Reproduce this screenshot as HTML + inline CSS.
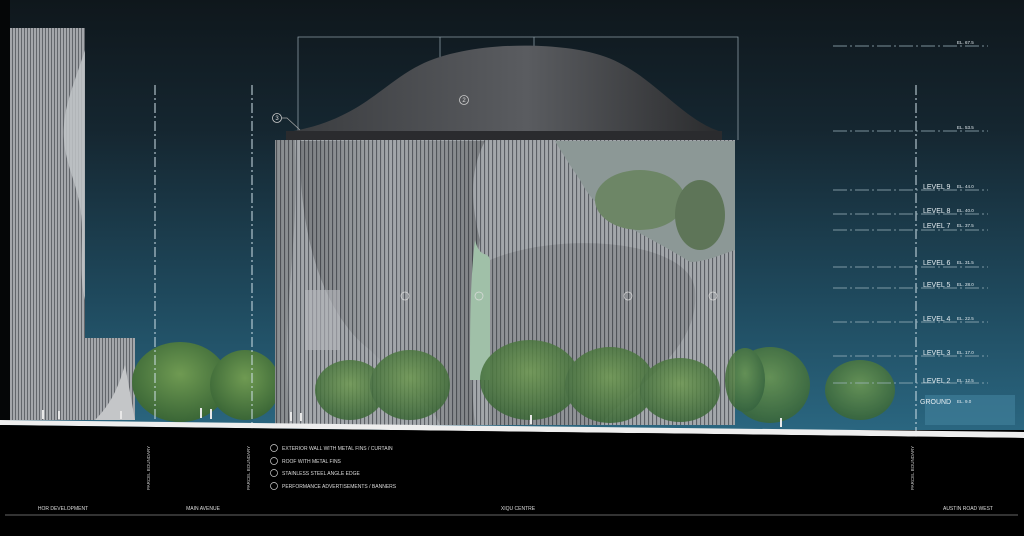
<!DOCTYPE html>
<html><head><meta charset="utf-8"><style>
html,body{margin:0;padding:0;background:#000;width:1024px;height:536px;overflow:hidden}
svg{display:block}
text{font-family:"Liberation Sans",sans-serif}
</style></head><body>
<svg width="1024" height="536" viewBox="0 0 1024 536" xmlns="http://www.w3.org/2000/svg">
<defs>
<linearGradient id="sky" x1="0" y1="0" x2="0" y2="1">
<stop offset="0" stop-color="#0f171c"/><stop offset="0.3" stop-color="#152630"/><stop offset="0.7" stop-color="#1f4a5e"/><stop offset="1" stop-color="#2a6680"/>
</linearGradient>
<pattern id="fins" width="4" height="10" patternUnits="userSpaceOnUse">
<rect width="4" height="10" fill="#a3a7ab"/><rect width="1.1" height="10" fill="#5c6066"/>
</pattern>
<pattern id="fins2" width="3" height="10" patternUnits="userSpaceOnUse">
<rect width="3" height="10" fill="#a4a7ab"/><rect width="1" height="10" fill="#62666b"/>
</pattern>
<linearGradient id="roof" x1="0" y1="0" x2="1" y2="0">
<stop offset="0" stop-color="#3a3c3f"/><stop offset="0.55" stop-color="#5a5c60"/><stop offset="1" stop-color="#2a2b2d"/>
</linearGradient>
<radialGradient id="tree" cx="0.5" cy="0.4" r="0.6">
<stop offset="0" stop-color="#6f9a52"/><stop offset="1" stop-color="#3a6636"/>
</radialGradient>
<linearGradient id="shade" x1="0" y1="0" x2="1" y2="0">
<stop offset="0" stop-color="#000" stop-opacity="0.25"/><stop offset="0.5" stop-color="#000" stop-opacity="0"/><stop offset="1" stop-color="#000" stop-opacity="0.25"/>
</linearGradient>
</defs>
<rect width="1024" height="430" fill="url(#sky)"/>
<rect x="0" y="0" width="10" height="430" fill="#050607"/>
<!-- left tower -->
<rect x="10" y="28" width="75" height="312" fill="url(#fins2)"/>
<path d="M85 50 C72 90 62 110 64 140 C66 170 82 190 82 230 C82 260 80 280 85 300Z" fill="#c0c3c6" opacity="0.85"/>
<rect x="10" y="338" width="125" height="82" fill="url(#fins2)"/>
<path d="M95 420 C115 400 120 380 125 365 L135 420Z" fill="#c4c6c8"/>
<!-- trees left -->
<ellipse cx="180" cy="382" rx="48" ry="40" fill="url(#tree)"/>
<ellipse cx="245" cy="385" rx="35" ry="35" fill="url(#tree)"/>
<!-- dashed verticals -->
<g stroke="#cfe0e8" stroke-width="1" stroke-dasharray="10 3 2 3">
<line x1="155" y1="85" x2="155" y2="520"/><line x1="252" y1="85" x2="252" y2="520"/><line x1="916" y1="85" x2="916" y2="520"/>
</g>
<g stroke="#8a9aa3" stroke-width="0.8" fill="none">
<path d="M298 145 V37 H738 V140"/><line x1="440" y1="37" x2="440" y2="135"/><line x1="534" y1="37" x2="534" y2="47"/>
</g>
<!-- roof -->
<path d="M288 132 C360 120 380 85 420 65 C470 40 560 42 600 55 C650 70 680 120 722 132Z" fill="url(#roof)"/>
<rect x="286" y="131" width="436" height="10" fill="#2a2b2e"/>
<circle cx="464" cy="100" r="4.5" fill="none" stroke="#ccc" stroke-width="0.8"/><text x="464" y="102" font-size="6" fill="#ddd" text-anchor="middle">2</text>
<circle cx="277" cy="118" r="4.5" fill="none" stroke="#ccc" stroke-width="0.8"/><text x="277" y="120" font-size="6" fill="#ddd" text-anchor="middle">3</text>
<path d="M282 118 H287 L300 130" stroke="#aaa" fill="none" stroke-width="0.7"/>
<!-- body -->
<rect x="275" y="140" width="460" height="285" fill="url(#fins)"/>
<path d="M275 140 H295 C300 250 280 300 290 425 H275Z" fill="#000" opacity="0.15"/>
<path d="M300 150 C300 250 330 320 370 350 C400 380 430 400 440 425 L475 425 C470 380 470 300 480 240 C470 200 470 170 485 141 L300 141Z" fill="url(#shade)"/>
<path d="M555 141 H735 V200 L735 250 C720 255 705 262 690 262 C640 230 600 220 580 180 C570 165 560 150 555 141Z" fill="#8c9896"/>
<ellipse cx="640" cy="200" rx="45" ry="30" fill="#6d8666"/>
<ellipse cx="700" cy="215" rx="25" ry="35" fill="#5e7558"/>
<path d="M490 260 C560 230 690 240 695 290 C700 350 640 380 600 425 L490 425Z" fill="#000" opacity="0.12"/>
<path d="M475 240 C480 260 488 250 490 260 L490 380 L470 380 C470 330 470 280 475 240Z" fill="#a0c0a8"/>
<rect x="305" y="290" width="35" height="60" fill="#b5b8bc" opacity="0.6"/>
<!-- trees front -->
<g fill="url(#tree)" opacity="0.85">
<ellipse cx="350" cy="390" rx="35" ry="30"/><ellipse cx="410" cy="385" rx="40" ry="35"/><ellipse cx="530" cy="380" rx="50" ry="40"/><ellipse cx="610" cy="385" rx="45" ry="38"/><ellipse cx="680" cy="390" rx="40" ry="32"/>
<ellipse cx="770" cy="385" rx="40" ry="38"/><ellipse cx="860" cy="390" rx="35" ry="30"/><ellipse cx="745" cy="380" rx="20" ry="32"/>
</g>
<rect x="925" y="395" width="90" height="30" fill="#3f7d99" opacity="0.7"/>
<g fill="none" stroke="#ddd" stroke-width="0.7">
<circle cx="405" cy="296" r="4"/><circle cx="479" cy="296" r="4"/><circle cx="628" cy="296" r="4"/><circle cx="713" cy="296" r="4"/>
</g>
<!-- people -->
<g fill="#e8e8e8">
<rect x="42" y="410" width="2" height="9"/><rect x="58" y="411" width="2" height="8"/><rect x="120" y="411" width="2" height="8"/><rect x="200" y="408" width="2" height="10"/><rect x="210" y="409" width="2" height="10"/><rect x="290" y="412" width="2" height="9"/><rect x="300" y="413" width="2" height="8"/><rect x="530" y="415" width="2" height="9"/><rect x="780" y="418" width="2" height="9"/>
</g>
<!-- ground -->
<path d="M0 420 L1024 432 L1024 438 L0 425Z" fill="#eee"/>
<path d="M0 425 L1024 438 L1024 536 L0 536Z" fill="#000"/>
<!-- levels -->
<g stroke="#9fb6c0" stroke-width="0.8" stroke-dasharray="14 3 2 3">
<line x1="833" y1="46" x2="988" y2="46"/><line x1="833" y1="131" x2="988" y2="131"/><line x1="833" y1="190" x2="988" y2="190"/>
<line x1="833" y1="214" x2="988" y2="214"/><line x1="833" y1="230" x2="988" y2="230"/><line x1="833" y1="267" x2="988" y2="267"/>
<line x1="833" y1="288" x2="988" y2="288"/><line x1="833" y1="322" x2="988" y2="322"/><line x1="833" y1="356" x2="988" y2="356"/>
<line x1="833" y1="383" x2="988" y2="383"/>
</g>
<g fill="#e6eef2" font-size="4.5">
<text x="957" y="44">EL. 67.5</text><text x="957" y="129">EL. 53.5</text><text x="957" y="188">EL. 44.0</text><text x="957" y="212">EL. 40.0</text>
<text x="957" y="227">EL. 37.5</text><text x="957" y="264">EL. 31.5</text><text x="957" y="286">EL. 28.0</text><text x="957" y="320">EL. 22.5</text>
<text x="957" y="354">EL. 17.0</text><text x="957" y="382">EL. 12.5</text><text x="957" y="403">EL. 9.0</text>
</g>
<g fill="#e6eef2" font-size="7">
<text x="923" y="189">LEVEL 9</text><text x="923" y="213">LEVEL 8</text><text x="923" y="228">LEVEL 7</text><text x="923" y="265">LEVEL 6</text>
<text x="923" y="287">LEVEL 5</text><text x="923" y="321">LEVEL 4</text><text x="923" y="355">LEVEL 3</text><text x="923" y="383">LEVEL 2</text><text x="920" y="404">GROUND</text>
</g>
<!-- legend -->
<g fill="#ddd" font-size="5">
<g stroke="#ccc" stroke-width="0.7" fill="none"><circle cx="274" cy="448" r="3.5"/><circle cx="274" cy="461" r="3.5"/><circle cx="274" cy="473" r="3.5"/><circle cx="274" cy="486" r="3.5"/></g>
<text x="282" y="450">EXTERIOR WALL WITH METAL FINS / CURTAIN</text>
<text x="282" y="463">ROOF WITH METAL FINS</text>
<text x="282" y="475">STAINLESS STEEL ANGLE EDGE</text>
<text x="282" y="488">PERFORMANCE ADVERTISEMENTS / BANNERS</text>
</g>
<g fill="#ccc" font-size="4.5">
<text transform="translate(150,490) rotate(-90)">PARCEL BOUNDARY</text>
<text transform="translate(250,490) rotate(-90)">PARCEL BOUNDARY</text>
<text transform="translate(914,490) rotate(-90)">PARCEL BOUNDARY</text>
</g>
<line x1="5" y1="515" x2="1018" y2="515" stroke="#888" stroke-width="0.8"/>
<g fill="#ddd" font-size="5">
<text x="63" y="510" text-anchor="middle">HOR DEVELOPMENT</text><text x="203" y="510" text-anchor="middle">MAIN AVENUE</text>
<text x="518" y="510" text-anchor="middle">XIQU CENTRE</text><text x="968" y="510" text-anchor="middle">AUSTIN ROAD WEST</text>
</g>
</svg>
</body></html>
